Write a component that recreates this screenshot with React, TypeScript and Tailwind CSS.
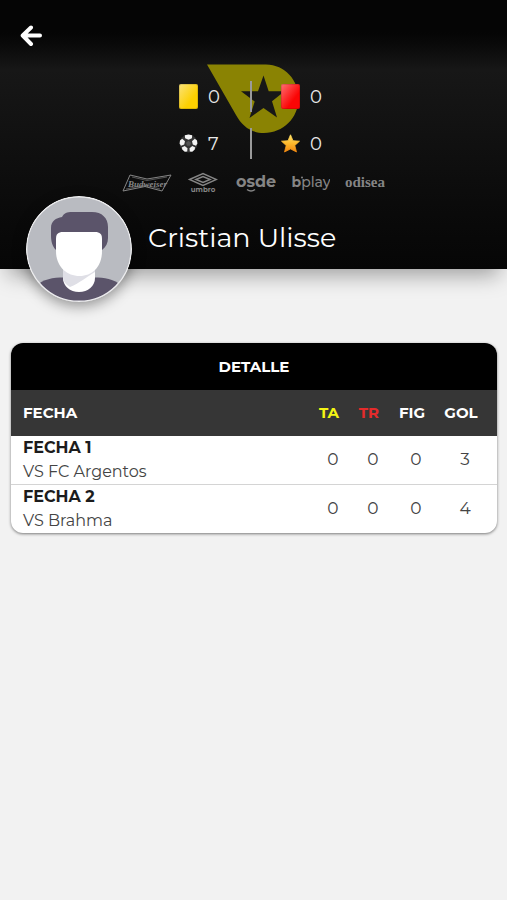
import React from "react";

const matches = [
  { date: "FECHA 1", rival: "VS FC Argentos", ta: 0, tr: 0, fig: 0, gol: 3 },
  { date: "FECHA 2", rival: "VS Brahma", ta: 0, tr: 0, fig: 0, gol: 4 },
];

function BackIcon() {
  return (
    <svg viewBox="0 0 22 22" className="h-[22px] w-[22px]" fill="none" stroke="#fff" strokeWidth="4" strokeLinecap="round" strokeLinejoin="round" aria-hidden="true">
      <path d="M11 2.500 2.700 10.500l8.300 8.500M3 10.500h17" />
    </svg>
  );
}

function TeamLogo() {
  return (
    <svg viewBox="0 0 94 69" className="absolute left-1/2 top-16 h-[69px] w-[94px] -translate-x-1/2" aria-hidden="true">
      <path d="M0 0.600H59C78 1 91.500 16 91.500 34.500C91.500 54 76 69 57 69C44 69 35 62 29 51Z" fill="#8a8303" />
      <path d="M56.500 11.500 61.700 27.200H77.500L65 37.200 70 53.500 56.500 44 42.500 54 47.700 37.400 34 27.200H51Z" fill="#171717" />
    </svg>
  );
}

function Card({ from, to }: { from: string; to: string }) {
  return (
    <svg viewBox="0 0 19 25" className="h-[25px] w-[19px] shrink-0" aria-hidden="true">
      <defs>
        <linearGradient id={"card" + to} x1="0" y1="0" x2="1" y2="1">
          <stop offset="0" stopColor={from} />
          <stop offset="0.65" stopColor={to} />
        </linearGradient>
      </defs>
      <rect width="19" height="25" rx="2" fill={"url(#card" + to + ")"} />
      <rect x="0.500" y="0.500" width="18" height="24" rx="1.500" fill="none" stroke="#000" strokeOpacity="0.12" />
    </svg>
  );
}

function Ball() {
  return (
    <svg viewBox="0 0 19 19" className="h-[19px] w-[19px] shrink-0" aria-hidden="true">
      <circle cx="9.500" cy="9.500" r="9" fill="#343434" />
      <g fill="#f4f4f4">
        <path d="M5.800 1.300 9.500 0.500 13.200 1.300 12.900 4.200 9.500 5.800 6.100 4.200Z" />
        <path d="M1 6.600 3.200 4.800 6 7.200 5.200 10.600 2 11.800 0.600 9.500Z" />
        <path d="M18 6.600 15.800 4.800 13 7.200 13.800 10.600 17 11.800 18.400 9.500Z" />
        <path d="M2.800 13.500 5.700 12 8.500 14.200 8.200 17.400 5.800 17.700 3.500 15.800Z" />
        <path d="M16.200 13.500 13.300 12 10.500 14.200 10.800 17.400 13.200 17.700 15.500 15.800Z" />
      </g>
      <path d="M9.500 6.800 12 8.700 11.100 11.800H7.900L7 8.700Z" fill="#555" />
    </svg>
  );
}

function Star() {
  return (
    <svg viewBox="0 0 19 19" className="h-[19px] w-[19px] shrink-0" aria-hidden="true">
      <defs>
        <linearGradient id="star" x1="0" y1="0" x2="0" y2="1">
          <stop offset="0" stopColor="#ffe36b" />
          <stop offset="0.5" stopColor="#fdb92c" />
          <stop offset="1" stopColor="#f0860f" />
        </linearGradient>
      </defs>
      <path d="M9.500 0.800 12 6.700 18.500 7.200 13.800 11.500 15.500 18 9.500 14.900 3.500 18 5.200 11.500 0.500 7.200 7 6.700Z" fill="url(#star)" stroke="url(#star)" strokeWidth="0.800" strokeLinejoin="round" />
    </svg>
  );
}

function Stat({ icon, value, first }: { icon: React.ReactNode; value: number; first?: boolean }) {
  return (
    <div className={first ? "flex h-[31px] w-[73px] items-center gap-2.5 border-r-2 border-[#9a9a9a]" : "flex h-[31px] w-[76px] items-center gap-2.5 pl-[29px]"}>
      {icon}
      <span>{value}</span>
    </div>
  );
}

function Sponsors() {
  return (
    <div className="mt-3 flex h-6 items-center justify-center gap-3.5 text-[#858585]">
      <svg viewBox="0 0 50 18" className="h-[18px] w-[50px]" fill="none" stroke="currentColor" role="img" aria-label="Budweiser">
        <path d="M8 1 25 5 49 1 40 17 23 12.500 1 17Z" strokeWidth="1" />
        <path d="M10 3 25 6.500 45 3M4 15 23 11 38 15" strokeWidth="0.600" />
        <text x="6" y="12.500" fontFamily="Liberation Serif, serif" fontSize="9" fontStyle="italic" fontWeight="700" fill="currentColor" stroke="none">Budweiser</text>
      </svg>
      <svg viewBox="0 0 32 22" className="h-[22px] w-8" fill="none" stroke="currentColor" role="img" aria-label="Umbro">
        <path d="M3.500 7.500 17 1.500 30.500 7.500 17 13.500Z" strokeWidth="1.400" />
        <path d="M10 7.500 17 4.500 24 7.500 17 10.500Z" strokeWidth="1.600" />
        <text x="17" y="20" textAnchor="middle" fontFamily="Montserrat, Inter, sans-serif" fontSize="7" fontWeight="700" fill="currentColor" stroke="none">umbro</text>
      </svg>
      <svg viewBox="0 0 44 22" className="h-[22px] w-11" fill="none" stroke="currentColor" role="img" aria-label="osde">
        <text x="24" y="15" textAnchor="middle" fontFamily="Montserrat, Inter, sans-serif" fontSize="16" fontWeight="700" fill="currentColor" stroke="none">osde</text>
        <path d="M15 17.500Q19 20.500 23 17.500" strokeWidth="1.500" />
      </svg>
      <svg viewBox="0 0 40 22" className="h-[22px] w-10" role="img" aria-label="bplay">
        <text x="21" y="15" textAnchor="middle" fontFamily="Montserrat, Inter, sans-serif" fontSize="14" fontWeight="500" fill="currentColor"><tspan fontWeight="700">b</tspan>play</text>
        <circle cx="12" cy="5.500" r="1" fill="currentColor" />
      </svg>
      <svg viewBox="0 0 41 22" className="h-[22px] w-[41px]" role="img" aria-label="odisea">
        <text x="21" y="15" textAnchor="middle" fontFamily="Liberation Serif, serif" fontSize="15" fontWeight="700" fill="currentColor">odisea</text>
      </svg>
    </div>
  );
}

function Avatar() {
  return (
    <svg viewBox="0 0 106 106" className="h-[106px] w-[106px] shrink-0 rounded-full shadow-[0_4px_14px_rgba(0,0,0,0.4)]" role="img" aria-label="Cristian Ulisse">
      <defs>
        <clipPath id="avatar"><circle cx="53" cy="53" r="52.500" /></clipPath>
      </defs>
      <g clipPath="url(#avatar)">
        <rect width="106" height="106" fill="#b9bbc1" />
        <path d="M10 90C17 83 27 81.500 38 81.500H68C79 81.500 87 83 95 89L88 106H18Z" fill="#5b546a" />
        <path d="M37 68H69V82C69 90 62 96 53 96S37 90 37 82Z" fill="#fff" />
        <path d="M37 68H69V76C60 81 54 87 44 91C39 88 37 85 37 80Z" fill="#dfdfe6" />
        <path d="M30 54C26 50 25 45 25 39V32C25 25 30 22 36 21C38 17 41 16 46 16H66C76 16 82 22 82 31V42C82 47 80 51 76 54Z" fill="#5b546a" />
        <path d="M37 36H69C74 36 76 38 76 43V55C76 70 67 80 53.500 80S30 70 30 55V43C30 38 32 36 37 36Z" fill="#fff" />
      </g>
      <circle cx="53" cy="53" r="52.300" fill="none" stroke="#ececee" strokeWidth="1.400" />
    </svg>
  );
}

const headCell = "p-0 text-center";
const dataCell = "p-0 pl-2 text-center text-[17px] text-[#444]";

export default function App() {
  return (
    <div className="min-h-screen bg-[#f2f2f2] font-['Montserrat','Inter',sans-serif]">
      <header className="relative flow-root bg-linear-to-b from-[#050505] from-[12%] via-[#171717] via-[26%] to-[#060606] shadow-[0_14px_20px_-8px_rgba(0,0,0,0.35)]">
        <TeamLogo />
        <nav className="flex px-5 pb-[33px] pt-6">
          <a href="#volver" aria-label="Volver" className="flex h-6 items-center">
            <BackIcon />
          </a>
        </nav>
        <div className="relative flex flex-col items-center gap-4 text-[18px] leading-6 text-[#e8e8e8]">
          <div className="flex">
            <Stat first icon={<Card from="#fbe37a" to="#fdd000" />} value={0} />
            <Stat icon={<Card from="#ff7070" to="#fb0505" />} value={0} />
          </div>
          <div className="flex">
            <Stat first icon={<Ball />} value={7} />
            <Stat icon={<Star />} value={0} />
          </div>
        </div>
        <Sponsors />
        <div className="relative -mb-[33px] flex items-start gap-4 px-[26px] pt-px">
          <Avatar />
          <h1 className="mt-6 text-[27px] leading-9 text-white">Cristian Ulisse</h1>
        </div>
      </header>

      <main className="pl-[11px] pr-2.5 pt-[74px]">
        <div className="overflow-hidden rounded-xl bg-white shadow-[0_1px_3px_rgba(0,0,0,0.5)]">
          <table className="w-full table-fixed border-collapse">
            <caption className="h-[47px] bg-black text-[15px] font-bold leading-[47px] text-white">DETALLE</caption>
            <colgroup>
              <col />
              <col className="w-10" />
              <col className="w-10" />
              <col className="w-[46px]" />
              <col className="w-[62px]" />
            </colgroup>
            <thead className="bg-[#363636] text-[15px] font-bold text-white">
              <tr className="h-[46px]">
                <th scope="col" className="p-0 pl-3 text-left">FECHA</th>
                <th scope="col" className={headCell + " text-[#f4f414]"}>TA</th>
                <th scope="col" className={headCell + " text-[#e52b2b]"}>TR</th>
                <th scope="col" className={headCell}>FIG</th>
                <th scope="col" className={headCell + " pr-2.5"}>GOL</th>
              </tr>
            </thead>
            <tbody>
              {matches.map((m) => (
                <tr key={m.date} className="h-12 border-b border-[#d4d4d4] last:border-b-0">
                  <td className="p-0 pl-3 leading-6">
                    <div className="text-[16px] font-bold text-[#1c1c1c]">{m.date}</div>
                    <div className="text-[16px] text-[#444]">{m.rival}</div>
                  </td>
                  <td className={dataCell}>{m.ta}</td>
                  <td className={dataCell}>{m.tr}</td>
                  <td className={dataCell}>{m.fig}</td>
                  <td className={dataCell + " pr-2.5"}>{m.gol}</td>
                </tr>
              ))}
            </tbody>
          </table>
        </div>
      </main>
    </div>
  );
}
